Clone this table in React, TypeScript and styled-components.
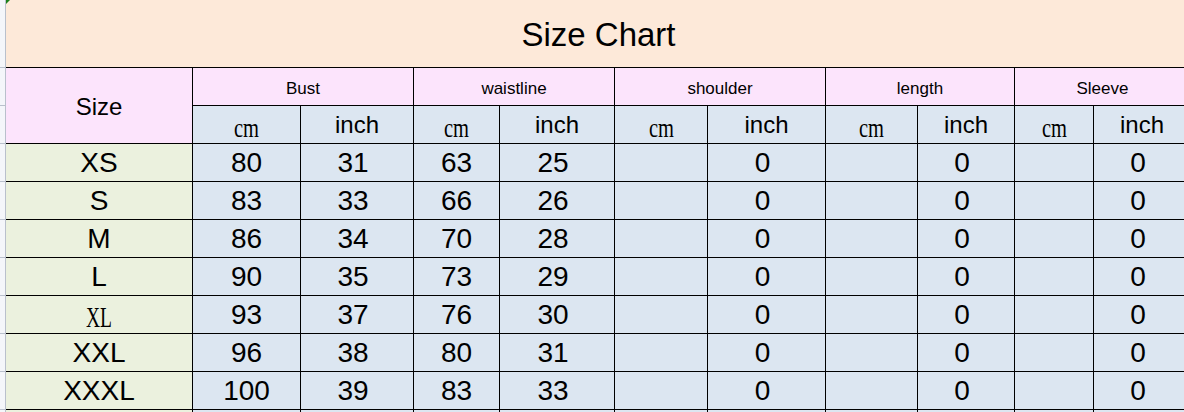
import React from 'react';
import styled, { createGlobalStyle, css } from 'styled-components';

const Global = createGlobalStyle`
  html, body { margin: 0; padding: 0; background: #ffffff; overflow: hidden; }
  body { font-family: "Liberation Sans", Arial, sans-serif; color: #000; }
  * { box-sizing: border-box; }
`;

const Sheet = styled.div`
  display: grid;
  grid-template-columns: 6px 187px 108px 113px 86px 115px 93px 118px 92px 97px 79px 97px;
  grid-template-rows: 68px repeat(10, 38px);
  width: 1191px;
  height: 412px;
  overflow: hidden;
`;

const Gutter = styled.div`
  background: #f4f6fa;
  border-right: 1px solid #b9c0cc;
  border-bottom: 1px solid #b9c0cc;
`;

const Title = styled.div`
  grid-column: 2 / -1;
  position: relative;
  display: flex;
  align-items: center;
  justify-content: center;
  background: #fde9d9;
  border-bottom: 1px solid #000;
  font-size: 33px;
  padding-top: 2px;
`;

const Marker = styled.span`
  position: absolute;
  left: 0;
  top: 0;
  width: 0;
  height: 0;
  border-top: 4px solid #1a7f1a;
  border-right: 4px solid transparent;
`;

type Tone = 'pink' | 'blue' | 'green';
const tones: Record<Tone, string> = {
  pink: '#fce4fc',
  blue: '#dce6f1',
  green: '#ebf1de',
};

const Cell = styled.div<{ $tone: Tone; $size?: number; $span?: number; $rows?: number; $shift?: number; $drop?: number }>`
  display: flex;
  align-items: center;
  justify-content: center;
  background: ${(p) => tones[p.$tone]};
  border-right: 1px solid #000;
  border-bottom: 1px solid #000;
  font-size: ${(p) => p.$size ?? 28}px;
  line-height: 1;
  white-space: nowrap;
  padding-top: ${(p) => p.$drop ?? 1}px;
  ${(p) => p.$span && css`grid-column: span ${p.$span};`}
  ${(p) => p.$rows && css`grid-row: span ${p.$rows};`}
  ${(p) => p.$shift && css`padding-right: ${p.$shift}px;`}
`;

const Serif = styled.span<{ $size: number; $scale: number; $drop: number }>`
  display: inline-block;
  font-family: "Liberation Serif", "Times New Roman", serif;
  font-size: ${(p) => p.$size}px;
  transform: scaleX(${(p) => p.$scale});
  margin-top: ${(p) => p.$drop}px;
`;

const groups = ['Bust', 'waistline', 'shoulder', 'length', 'Sleeve'];

const rows: { size: string; serif?: boolean; vals: (string | null)[] }[] = [
  { size: 'XS', vals: ['80', '31', '63', '25', null, '0', null, '0', null, '0'] },
  { size: 'S', vals: ['83', '33', '66', '26', null, '0', null, '0', null, '0'] },
  { size: 'M', vals: ['86', '34', '70', '28', null, '0', null, '0', null, '0'] },
  { size: 'L', vals: ['90', '35', '73', '29', null, '0', null, '0', null, '0'] },
  { size: 'XL', serif: true, vals: ['93', '37', '76', '30', null, '0', null, '0', null, '0'] },
  { size: 'XXL', vals: ['96', '38', '80', '31', null, '0', null, '0', null, '0'] },
  { size: 'XXXL', vals: ['100', '39', '83', '33', null, '0', null, '0', null, '0'] },
];

export default function App() {
  return (
    <>
      <Global />
      <Sheet>
        <Gutter />
        <Title>
          <Marker />
          Size Chart
        </Title>

        <Gutter />
        <Cell $tone="pink" $size={24} $rows={2} $drop={2}>Size</Cell>
        {groups.map((g) => (
          <Cell key={g} $tone="pink" $size={17} $span={2} $drop={3}>{g}</Cell>
        ))}

        <Gutter />
        {groups.map((g) => (
          <React.Fragment key={g}>
            <Cell $tone="blue" $drop={0}>
              <Serif $size={27} $scale={0.76} $drop={8}>cm</Serif>
            </Cell>
            <Cell $tone="blue" $size={24} $drop={1}>inch</Cell>
          </React.Fragment>
        ))}

        {rows.map((r) => (
          <React.Fragment key={r.size}>
            <Gutter />
            <Cell $tone="green">
              {r.serif ? <Serif $size={30} $scale={0.65} $drop={4}>{r.size}</Serif> : r.size}
            </Cell>
            {r.vals.map((v, i) => (
              <Cell key={i} $tone="blue" $shift={i % 2 === 1 ? 8 : undefined}>{v}</Cell>
            ))}
          </React.Fragment>
        ))}

        <Gutter />
        <Cell $tone="green" />
        {Array.from({ length: 10 }).map((_, i) => (
          <Cell key={i} $tone="blue" />
        ))}
      </Sheet>
    </>
  );
}
